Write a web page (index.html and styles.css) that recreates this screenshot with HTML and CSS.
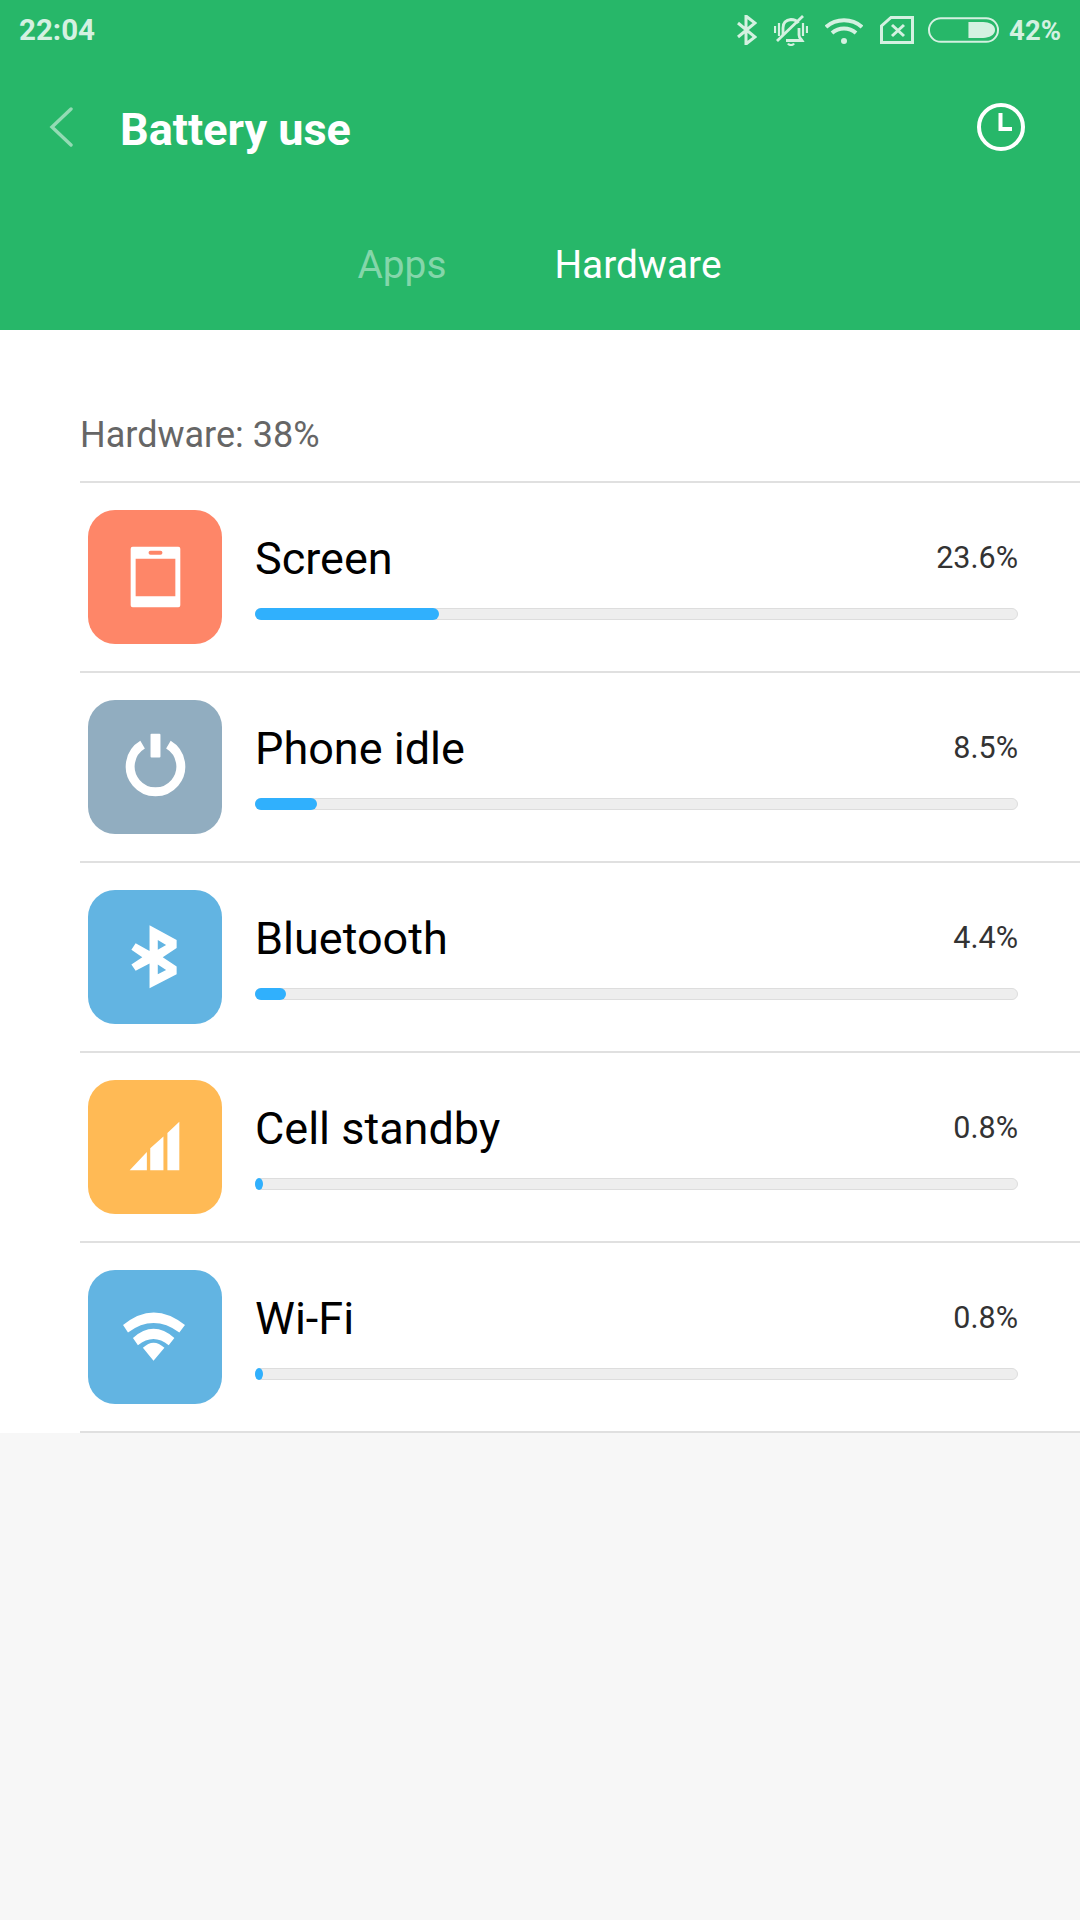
FILE: index.html
```html
<!DOCTYPE html>
<html lang="en">
<head>
    <meta charset="UTF-8">
    <meta name="viewport" content="width=device-width, initial-scale=1.0">
    <title>Battery use</title>
    <link rel="stylesheet" href="styles.css">
</head>
<body>
    <header class="header">
        <div class="statusbar">
            <span class="time">22:04</span>
            <div class="status-icons">
                <svg class="st-bt" viewBox="0 0 20 30" fill="none" stroke="currentColor" stroke-width="3"><path d="M1 8 18 22 9 29V1L18 8 1 22"/></svg>
                <svg class="st-bell" viewBox="0 0 34 31" fill="none" stroke="currentColor" stroke-width="2.800">
                    <path d="M9 20V13C9 8 12 5 17 4.500C20 4.500 23 6 24.500 8M25 13V20C25 23 27 24 28 25.500H12"/>
                    <path d="M3 26 29 1"/>
                    <path d="M1 11V18M5 8V21M33 11V18M29 8V21" stroke-width="2.200"/>
                    <path d="M14 28.500C15 30.500 19 30.500 20 28.500" stroke-width="2.200"/>
                </svg>
                <svg class="st-wifi" viewBox="0 0 38 27" fill="none" stroke="currentColor" stroke-width="4">
                    <path d="M1 10C11 1 27 1 37 10"/>
                    <path d="M7 16C14 10 24 10 31 16"/>
                    <circle cx="19" cy="24" r="3" fill="currentColor" stroke="none"/>
                </svg>
                <svg class="st-sim" viewBox="0 0 34 28" fill="none" stroke="currentColor" stroke-width="3">
                    <path d="M11 1.500H32.500V26.500H1.500V10Z"/>
                    <path d="M12 9 24 20M24 9 12 20"/>
                </svg>
                <svg class="st-bat" viewBox="0 0 72 26">
                    <rect x="1" y="1" width="70" height="24" rx="12" fill="none" stroke="currentColor" stroke-width="2"/>
                    <path d="M41 5H56C62 5 68 8 68 13S62 21 56 21H41Z" fill="currentColor"/>
                </svg>
                <span class="level">42%</span>
            </div>
        </div>
        <div class="toolbar">
            <svg class="back" viewBox="0 0 24 40" fill="none" stroke="currentColor" stroke-width="3.400" stroke-linecap="round"><path d="M22 2 3 20 22 38"/></svg>
            <h1 class="title">Battery use</h1>
            <svg class="clock" viewBox="0 0 48 48" fill="none" stroke="currentColor" stroke-width="4"><circle cx="24" cy="24" r="22"/><path d="M23.500 10V26H35"/></svg>
        </div>
        <nav class="tabs">
            <span class="tab tab-dim">Apps</span>
            <span class="tab">Hardware</span>
        </nav>
    </header>

    <main class="content">
        <div class="section-title">Hardware: 38%</div>

        <div class="row">
            <div class="app-icon icon-screen">
                <svg viewBox="0 0 135 135"><path fill="#fff" fill-rule="evenodd" d="M45 37H91Q93 37 93 39V96Q93 98 91 98H45Q43 98 43 96V39Q43 37 45 37ZM48 49V87H88V49ZM63 41Q61 41 61 43T63 45H73Q75 45 75 43T73 41Z"/></svg>
            </div>
            <div class="row-body">
                <div class="row-top"><span class="name">Screen</span><span class="pct">23.6%</span></div>
                <div class="track"><div class="fill" style="width: 184px"></div></div>
            </div>
        </div>

        <div class="row">
            <div class="app-icon icon-idle">
                <svg viewBox="0 0 135 135"><path d="M55 45A25.500 25.500 0 1 0 81 45" fill="none" stroke="#fff" stroke-width="9"/><rect x="63" y="34" width="10" height="24" rx="1" fill="#fff"/></svg>
            </div>
            <div class="row-body">
                <div class="row-top"><span class="name">Phone idle</span><span class="pct">8.5%</span></div>
                <div class="track"><div class="fill" style="width: 62px"></div></div>
            </div>
        </div>

        <div class="row">
            <div class="app-icon icon-blue">
                <svg viewBox="0 0 135 135"><path fill="#fff" fill-rule="evenodd" d="M62 35.500 89.300 50.300V58.500L75.300 67.700 89.300 77V85L62 99V74L48 81.400 43.700 75 54.700 67.700 43.700 60.300 48 53.600 62 61.400ZM70.300 50.300V60.300L78.700 55.500ZM70.300 75V85L78.700 80.600Z"/></svg>
            </div>
            <div class="row-body">
                <div class="row-top"><span class="name">Bluetooth</span><span class="pct">4.4%</span></div>
                <div class="track"><div class="fill" style="width: 31px"></div></div>
            </div>
        </div>

        <div class="row">
            <div class="app-icon icon-cell">
                <svg viewBox="0 0 135 135"><path fill="#fff" d="M42 91 59.300 72.500V91ZM62.700 91V68.800L76 57V91ZM80 91V53.300L92 42V91Z"/></svg>
            </div>
            <div class="row-body">
                <div class="row-top"><span class="name">Cell standby</span><span class="pct">0.8%</span></div>
                <div class="track"><div class="fill fill-min" style="width: 8px"></div></div>
            </div>
        </div>

        <div class="row">
            <div class="app-icon icon-blue">
                <svg viewBox="0 0 135 135"><path fill="#fff" d="M35.300 55.500Q66 30 97.700 55.500L92 63Q66 44 40.300 63ZM45.300 68.400Q66 50 87 68.400L81.300 75.800Q66 63 50.300 75.800ZM55.300 78.400Q66 68 77 78.400L66 91.400Z"/></svg>
            </div>
            <div class="row-body">
                <div class="row-top"><span class="name">Wi-Fi</span><span class="pct">0.8%</span></div>
                <div class="track"><div class="fill fill-min" style="width: 8px"></div></div>
            </div>
        </div>
    </main>
</body>
</html>
```

FILE: styles.css
```css
body {
    font-family: Roboto, "Liberation Sans", sans-serif;
    margin: 0;
    height: 1920px;
    background-color: #f7f7f7;
    overflow: hidden;
}
.header {
    height: 330px;
    background-color: #27b769;
    color: #fff;
}
.statusbar {
    height: 60px;
    padding: 0 19px;
    display: flex;
    justify-content: space-between;
    align-items: center;
    color: #d4f1e1;
}
.time {
    font-size: 29.5px;
    font-weight: 700;
}
.status-icons {
    display: flex;
    align-items: center;
}
.status-icons svg {
    display: block;
    flex: none;
}
.st-bt { width: 20px; height: 30px; }
.st-bell { width: 34px; height: 31px; margin-left: 17px; }
.st-wifi { width: 38px; height: 27px; margin-left: 17px; }
.st-sim { width: 34px; height: 28px; margin-left: 17px; }
.st-bat { width: 71px; height: 26px; margin-left: 14px; }
.level {
    margin-left: 10px;
    font-size: 27.5px;
    font-weight: 700;
}
.toolbar {
    height: 134px;
    padding: 0 55px 0 49px;
    display: flex;
    align-items: center;
}
.back {
    width: 24px;
    height: 40px;
    color: #93dbb4;
}
.title {
    flex: 1;
    margin: 0 0 0 47px;
    padding-top: 5px;
    font-size: 45px;
    font-weight: 700;
}
.clock {
    width: 48px;
    height: 48px;
}
.tabs {
    height: 135px;
    box-sizing: border-box;
    padding: 5px 1px 0 0;
    display: flex;
    justify-content: center;
    align-items: center;
    gap: 108px;
}
.tab {
    font-size: 38.8px;
}
.tab-dim {
    color: #84d6aa;
}
.content {
    background: #fff;
    height: 1103px;
    box-sizing: border-box;
    padding-left: 80px;
}
.section-title {
    height: 153px;
    box-sizing: border-box;
    padding-top: 81px;
    border-bottom: 2px solid #e0e0e0;
    font-size: 36px;
    line-height: 48px;
    color: #666;
}
.row {
    height: 190px;
    box-sizing: border-box;
    padding: 27px 62px 0 8px;
    border-bottom: 2px solid #e0e0e0;
    display: flex;
}
.app-icon {
    width: 134px;
    height: 134px;
    flex: none;
    margin-right: 1px;
    border-radius: 27px;
}
.app-icon svg {
    display: block;
    width: 134px;
    height: 134px;
}
.icon-screen { background: #fe8668; }
.icon-idle { background: #91adc0; }
.icon-blue { background: #62b4e2; }
.icon-cell { background: #ffba55; }
.row-body {
    flex: 1;
    margin-left: 32px;
}
.row-top {
    display: flex;
    justify-content: space-between;
    align-items: center;
    height: 79px;
    padding-top: 19px;
    line-height: 60px;
    box-sizing: border-box;
}
.name {
    font-size: 45px;
    color: #000;
}
.pct {
    margin-bottom: 2px;
    font-size: 30.5px;
    color: #333;
}
.track {
    height: 12px;
    margin-top: 19px;
    box-sizing: border-box;
    background: #eee;
    border: 1px solid #ddd;
    border-radius: 6px;
}
.fill {
    height: 12px;
    margin: -1px 0 0 -1px;
    background: #30b0fd;
    border-radius: 6px;
}
.fill-min {
    border-radius: 50%;
}
```
